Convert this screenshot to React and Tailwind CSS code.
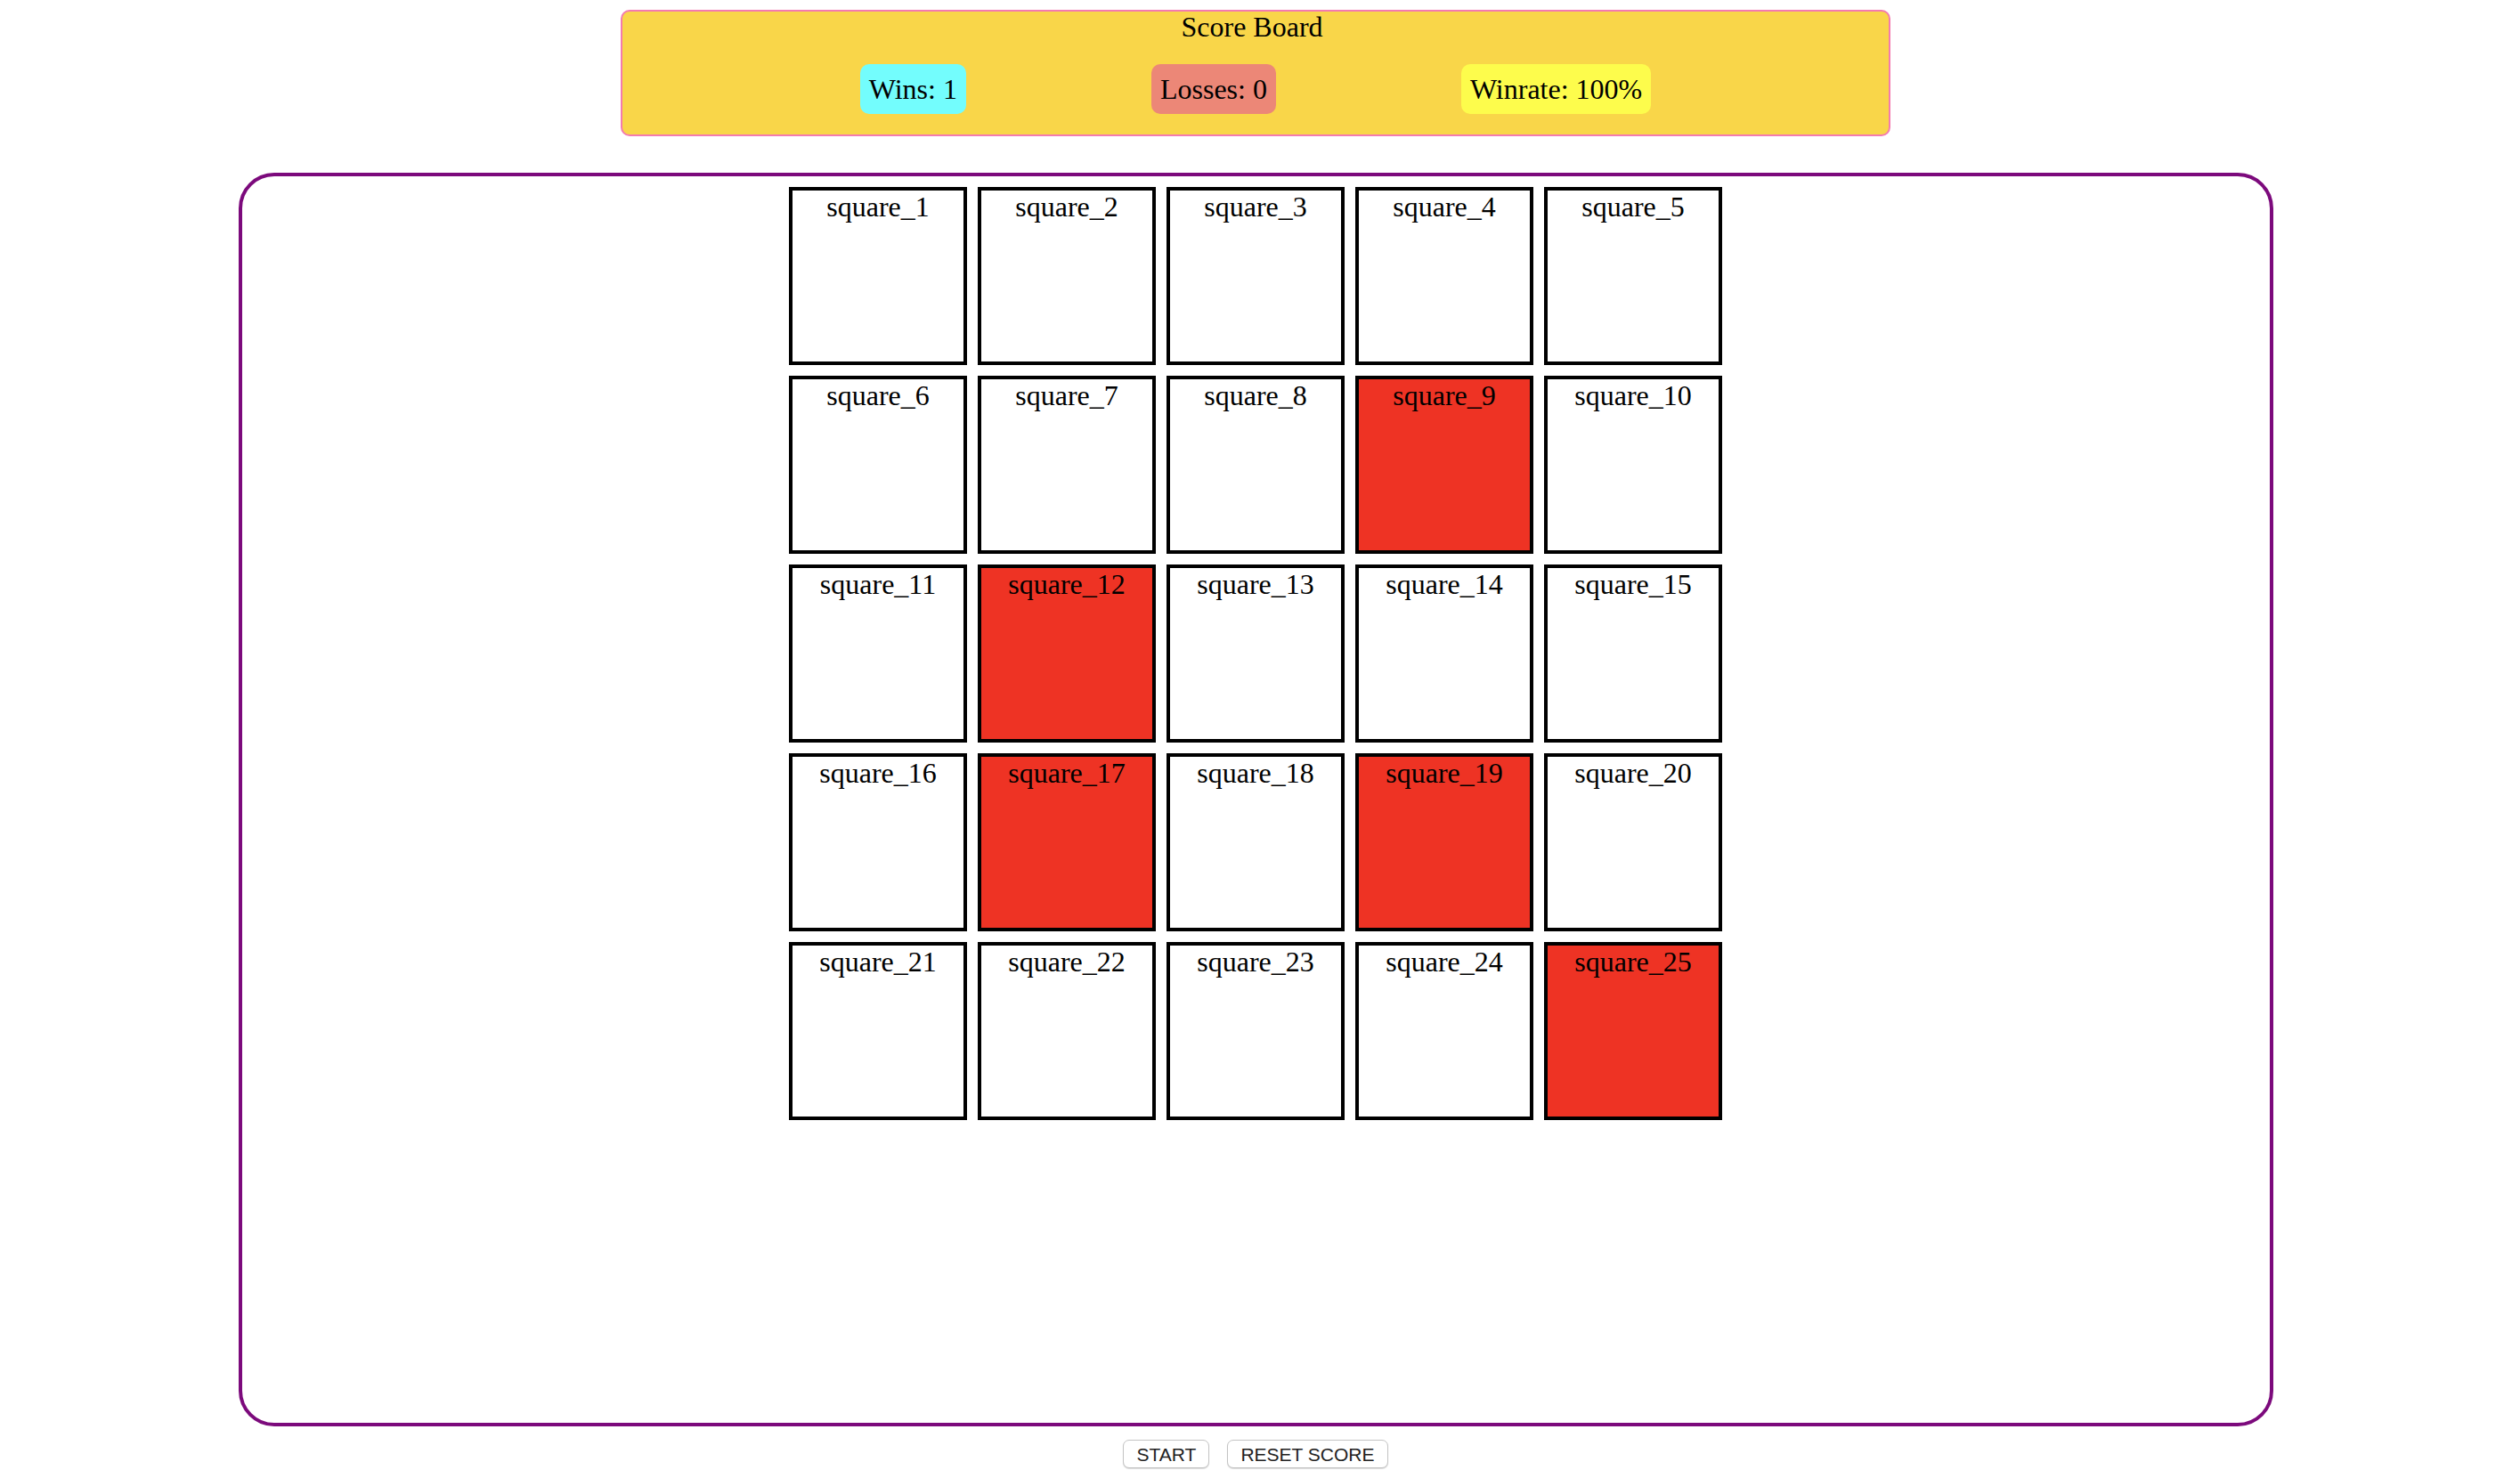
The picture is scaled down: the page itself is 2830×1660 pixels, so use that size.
import React from "react"

const red = [9, 12, 17, 19, 25]

function Square({ n }) {
  const lit = red.includes(n)
  return (
    <div
      className={`w-[200px] h-[200px] border-[4px] border-black text-center text-[32px] leading-[36px] text-black ${
        lit ? "bg-[#ee3324]" : "bg-white"
      }`}
    >
      square_{n}
    </div>
  )
}

export default function App() {
  const squares = Array.from({ length: 25 }, (_, i) => i + 1)

  return (
    <div
      className="w-[2820px] min-h-[1660px] bg-white flex flex-col items-center pt-[11px]"
      style={{ fontFamily: '"Liberation Serif", "Times New Roman", serif' }}
    >
      {/* score board */}
      <div className="w-[1426px] h-[142px] border-2 border-[#f37bb0] rounded-[10px] bg-[#f9d649] flex flex-col items-center">
        <div className="text-[32px] leading-[35px] text-black mr-[8px]">Score Board</div>
        <div className="flex justify-center gap-[208px] mt-[24px] text-[32px] leading-[36px] text-black">
          <span className="bg-[#73fdfd] rounded-[10px] p-[10px]">Wins: 1</span>
          <span className="bg-[#ec8777] rounded-[10px] p-[10px]">Losses: 0</span>
          <span className="bg-[#fdfc4c] rounded-[10px] p-[10px]">Winrate: 100%</span>
        </div>
      </div>

      {/* board */}
      <div className="mt-[41px] w-[2285px] h-[1408px] border-[4px] border-[#7c0a7c] rounded-[40px] flex justify-center pt-[12px]">
        <div className="grid grid-cols-5 gap-[12px] content-start">
          {squares.map((n) => (
            <Square key={n} n={n} />
          ))}
        </div>
      </div>

      <div
        className="flex gap-[20px] mt-[15px]"
        style={{ fontFamily: '"Liberation Sans", Arial, sans-serif' }}
      >
        <button className="h-[32px] px-[14px] bg-white border border-[#c4c4c4] rounded-[7px] text-[21px] text-[#222] shadow-[0_1px_1px_rgba(0,0,0,0.15)]">
          START
        </button>
        <button className="h-[32px] px-[14px] bg-white border border-[#c4c4c4] rounded-[7px] text-[21px] text-[#222] shadow-[0_1px_1px_rgba(0,0,0,0.15)]">
          RESET SCORE
        </button>
      </div>
    </div>
  )
}
